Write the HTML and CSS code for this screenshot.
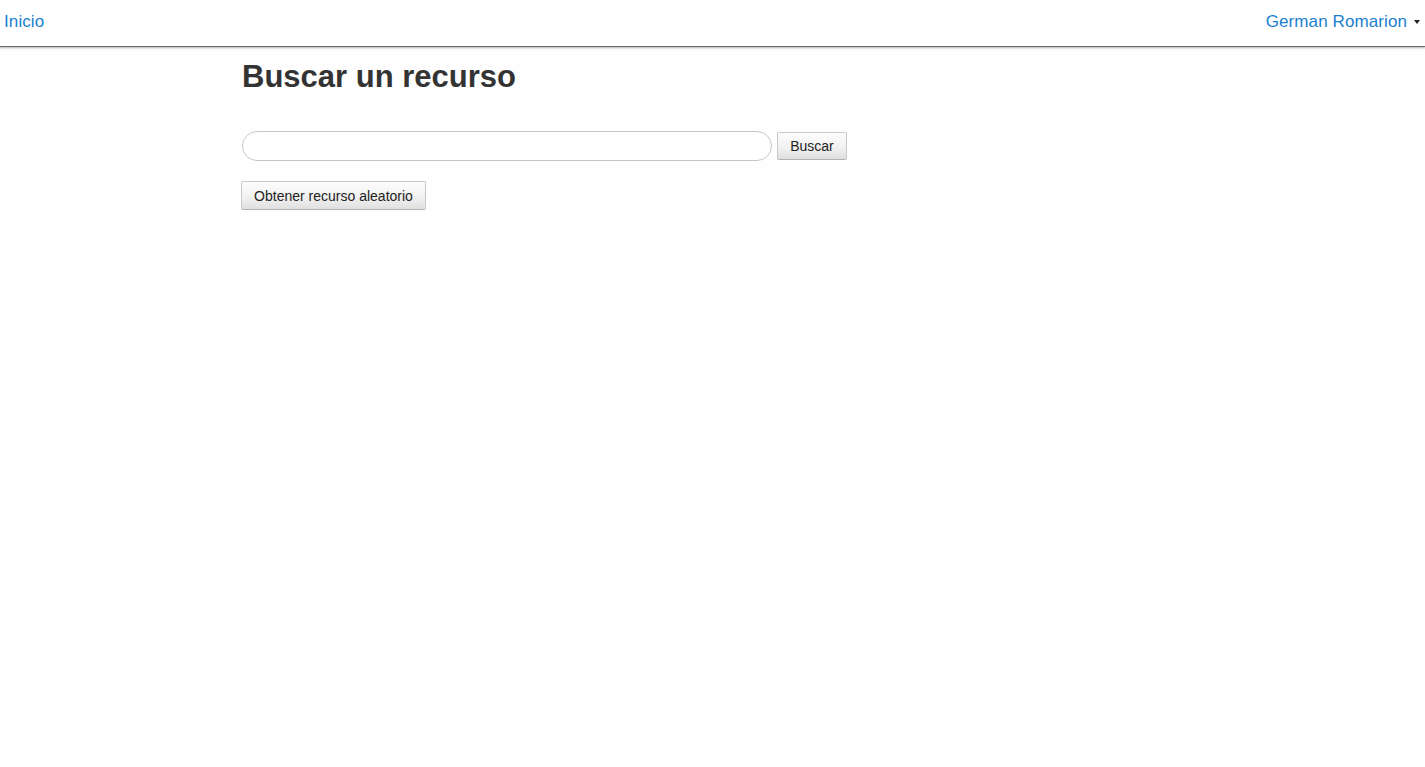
FILE: index.html
```html
<!DOCTYPE html>
<html lang="es">
<head>
<meta charset="utf-8">
<title>Buscar un recurso</title>
<link rel="stylesheet" href="styles.css">
</head>
<body>
<nav class="navbar">
  <a class="nav-link" href="#">Inicio</a>
  <a class="nav-link user" href="#">German Romarion <span class="caret"></span></a>
</nav>
<main class="content">
  <h1 class="title">Buscar un recurso</h1>
  <form class="search">
    <input class="search-input" type="text">
    <button class="btn btn-search" type="button">Buscar</button>
  </form>
  <div class="random">
    <button class="btn btn-wide" type="button">Obtener recurso aleatorio</button>
  </div>
</main>
</body>
</html>
```
FILE: styles.css
```css
html, body {
  margin: 0;
  padding: 0;
  background: #fefefe;
  font-family: "Liberation Sans", Arial, sans-serif;
}
.navbar {
  height: 47px;
  box-sizing: border-box;
  background: #fff;
  display: flex;
  justify-content: space-between;
  align-items: center;
  padding: 0 4px;
  border-bottom: 1px solid #6a6a6a;
  box-shadow: 0 1px 2px rgba(0,0,0,0.3);
}
.nav-link {
  color: #1a7fcf;
  text-decoration: none;
  font-size: 17px;
  letter-spacing: 0.1px;
  margin-top: -3px;
}
.user {
  display: flex;
  align-items: center;
  gap: 7px;
}
.caret {
  width: 0;
  height: 0;
  margin-right: 1px;
  border-left: 3.5px solid transparent;
  border-right: 3.5px solid transparent;
  border-top: 4px solid #222;
}
.content {
  padding-left: 242px;
}
.title {
  margin: 12px 0 0;
  font-size: 31px;
  font-weight: bold;
  color: #333;
  line-height: 36px;
}
.search {
  display: flex;
  align-items: flex-start;
  gap: 5px;
  margin: 36px 0 0;
}
.search-input {
  width: 530px;
  height: 30px;
  box-sizing: border-box;
  margin: 0;
  border: 1px solid #c6c6c6;
  border-radius: 15px;
  background: #fff;
  padding: 0 10px;
  font-family: inherit;
}
.btn {
  font-family: "Liberation Sans", Arial, sans-serif;
  font-size: 14px;
  color: #222;
  height: 29px;
  padding: 0;
  border: 1px solid #c9c9c9;
  border-bottom-color: #b3b3b3;
  border-radius: 2px;
  background: linear-gradient(#fdfdfd, #f1f1f1 55%, #e0e0e0);
  margin: 0;
}
.btn-search {
  width: 70px;
  height: 28px;
  margin-top: 1px;
}
.random {
  margin-top: 20px;
  margin-left: -1px;
}
.btn-wide {
  width: 185px;
}
```
